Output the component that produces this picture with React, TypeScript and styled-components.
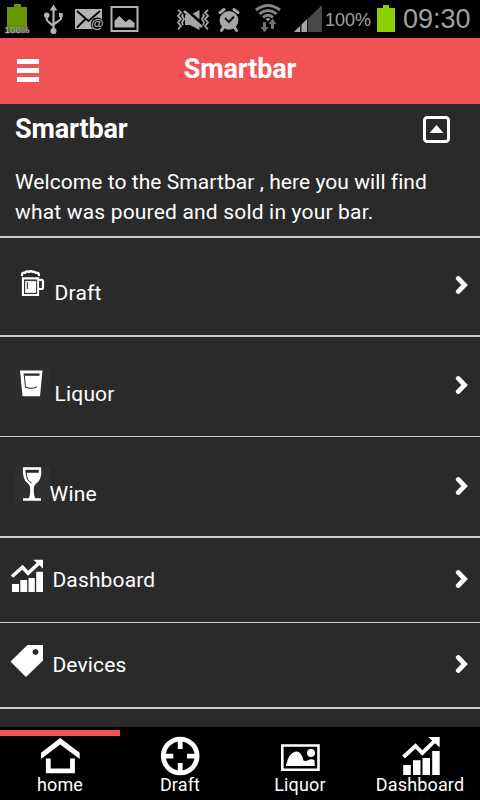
import React from 'react';
import styled, { createGlobalStyle } from 'styled-components';

const GlobalStyle = createGlobalStyle`
  * { box-sizing: border-box; }
  body { margin: 0; background: #2a2a2a; color: #fff; font-family: Roboto, "Liberation Sans", sans-serif; }
  svg { display: block; flex: none; }
`;

const Screen = styled.div`
  width: 480px;
  height: 800px;
  display: flex;
  flex-direction: column;
  overflow: hidden;
  background: #2a2a2a;
`;

const StatusBar = styled.div`
  height: 38px;
  flex: none;
  display: flex;
  background: #000;
  color: #a0a0a0;
  font-family: "Liberation Sans", Arial, sans-serif;
  white-space: nowrap;
`;

const StatusText = styled.span<{ $size: number; $width: number; $ml: number; $line: number }>`
  width: ${p => p.$width}px;
  margin-left: ${p => p.$ml}px;
  font-size: ${p => p.$size}px;
  line-height: ${p => p.$line}px;
`;

const Header = styled.header`
  height: 66px;
  flex: none;
  display: grid;
  grid-template-columns: 56px 1fr 56px;
  align-items: start;
  background: #f15354;
`;

const MenuButton = styled.button`
  border: 0;
  background: none;
  padding: 0;
  margin: 21px 0 0 17px;
  width: 22px;
  height: 23px;
  display: flex;
  flex-direction: column;
  justify-content: space-between;
`;

const MenuBar = styled.span`
  height: 5px;
  width: 22px;
  background: #fff;
`;

const Title = styled.h1`
  margin: 0;
  font-size: 27px;
  line-height: 32px;
  font-weight: 700;
  letter-spacing: -0.15px;
`;

const HeaderTitle = styled(Title)`
  margin-top: 15px;
  text-align: center;
`;

const Intro = styled.section`
  height: 134px;
  flex: none;
  padding: 9px 30px 0 15px;
  border-bottom: 2px solid #ccc;
`;

const IntroTop = styled.div`
  display: flex;
  justify-content: space-between;
  height: 54px;
`;

const CollapseButton = styled.button`
  width: 27px;
  height: 27px;
  margin-top: 3px;
  padding: 0;
  border: 0;
  background: none;
`;

const Welcome = styled.p`
  margin: 0;
  font-size: 21px;
  line-height: 30px;
  white-space: nowrap;
`;

const WelcomeLine = styled.span<{ $spacing: number }>`
  display: block;
  letter-spacing: ${p => p.$spacing}px;
`;

const Row = styled.div<{ $height: number; $line: number }>`
  height: ${p => p.$height}px;
  flex: none;
  display: flex;
  align-items: flex-start;
  border-bottom: ${p => p.$line}px solid #ccc;
`;

const RowIcon = styled.span<{ $top: number; $width: number }>`
  width: ${p => p.$width}px;
  flex: none;
  padding: ${p => p.$top}px 0 0 10px;
`;

const RowLabel = styled.span<{ $top: number }>`
  flex: 1;
  margin-top: ${p => p.$top}px;
  font-size: 21px;
  line-height: 26px;
  letter-spacing: 0.15px;
`;

const RowArrow = styled.span<{ $top: number }>`
  margin: ${p => p.$top}px 11px 0 0;
`;

const Spacer = styled.div`
  height: 18px;
  flex: none;
`;

const Nav = styled.nav`
  height: 73px;
  flex: none;
  display: grid;
  grid-template-columns: repeat(4, 1fr);
  background: #000;
  padding-top: 3px;
`;

const Tab = styled.div<{ $active?: boolean }>`
  border-top: 6px solid ${p => (p.$active ? '#f15354' : 'transparent')};
  display: flex;
  flex-direction: column;
  align-items: center;
`;

const TabLabel = styled.span`
  margin-top: 1px;
  font-size: 18px;
  line-height: 20px;
  letter-spacing: 0.15px;
`;

const BatteryCharge = () => (
  <svg width="34" height="38" viewBox="0 0 34 38">
    <path d="M7 7h7V4h7v3h6v26H7z" fill="#679600" />
    <text x="17" y="32.6" textAnchor="middle" textLength="25" fontSize="9.500" fill="#c0c0c0" stroke="#444" strokeWidth="1" paintOrder="stroke">100%</text>
  </svg>
);

const Usb = () => (
  <svg width="34" height="38" viewBox="34 0 34 38" fill="#b3b3b3">
    <g fill="none" stroke="#b3b3b3" strokeWidth="2.2">
      <path d="M53.5 9v22M46.7 15v4.500q0 1.500 6.800 6.500M61 15v3.500q0 1-7.500 6" />
    </g>
    <path d="M53.5 4.500l3.800 6h-7.600z" />
    <circle cx="46.7" cy="15.3" r="2.700" />
    <path d="M59 13h3.700v4H59z" />
    <circle cx="53.5" cy="31" r="3.100" />
  </svg>
);

const Mail = () => (
  <svg width="38" height="38" viewBox="68 0 38 38">
    <path d="M75 9h27v20H75z" fill="#b3b3b3" />
    <path d="M77 11l11.500 10L100 11M77 27.500l8.500-8.500" fill="none" stroke="#000" strokeWidth="1.800" />
    <circle cx="97.300" cy="24" r="6.600" fill="#000" />
    <text x="97.300" y="27.600" textAnchor="middle" fontSize="13" fontWeight="700" fill="#b9b9b9">@</text>
  </svg>
);

const Gallery = () => (
  <svg width="54" height="38" viewBox="106 0 54 38">
    <path d="M111.500 7h26v24h-26z" fill="none" stroke="#b3b3b3" strokeWidth="2" />
    <path d="M114.500 27.500V21l4.800-5 6.200 6 4-3 5 4v4.500z" fill="#b3b3b3" />
  </svg>
);

const Vibrate = () => (
  <svg width="54" height="38" viewBox="160 0 54 38">
    <g fill="none" stroke="#a6a6a6" strokeWidth="1.800">
      <path d="M178 10l3 2.500-3 3.500 3 3-3 3.500 3 3.500-3 3.500M183 14l-1 2 2 3-2 3.500 1 2.500M208 10l-3 2.500 3 3.500-3 3 3 3.500-3 3.500 3 3.500M203 14l1 2-2 3 2 3.500-1 2.500" />
    </g>
    <path d="M185 15h5l9.500-5v20l-9.500-5h-5z" fill="#a6a6a6" />
    <path d="M185.500 10.500l16.500 14" stroke="#000" strokeWidth="4.500" />
    <path d="M184 11l18 16" stroke="#a6a6a6" strokeWidth="2.500" />
  </svg>
);

const Alarm = () => (
  <svg width="34" height="38" viewBox="214 0 34 38">
    <g stroke="#a6a6a6" strokeWidth="3" strokeLinecap="round">
      <path d="M220 12.500l4-3M234 9.500l4 3M223 28l-1.500 2.500M235 28l1.500 2.500" />
    </g>
    <circle cx="229" cy="20.300" r="9.400" fill="#a6a6a6" />
    <path d="M225 18l4 4 5-5.500" fill="none" stroke="#111" strokeWidth="1.900" />
  </svg>
);

const Wifi = () => (
  <svg width="41" height="38" viewBox="248 0 41 38">
    <g fill="none" stroke="#858585" strokeWidth="2.900">
      <path d="M256 10q12-9 24 0M259.500 13.800q8.500-6.500 17 0M263 17.300q5-4 10 0" />
    </g>
    <path d="M265.500 19q2.500-2 5 0l-2.500 2.500z" fill="#999" />
    <path d="M263 22h3v5h2.500l-4 5.500-4-5.500h2.500zM271 29v-5h-2.500l4-5.500 4 5.500H274v5z" fill="#707070" />
  </svg>
);

const Signal = () => (
  <svg width="33" height="38" viewBox="289 0 33 38">
    <path d="M294 32L322 5v27z" fill="#484848" />
    <path d="M294 32l6-6v6zM301.500 24.500l5.500-5.500v13h-5.500z" fill="#a6a6a6" />
    <path d="M300.800 22v11M307.500 17v16" stroke="#111" strokeWidth="1" />
  </svg>
);

const Battery = () => (
  <svg width="26" height="38" viewBox="372 0 26 38">
    <path d="M377 8h6V5h6v3h6v24h-18z" fill="#8fce00" />
  </svg>
);

const Collapse = () => (
  <svg width="27" height="27" viewBox="0 0 27 27">
    <rect x="1.500" y="1.500" width="24" height="24" rx="2.800" fill="none" stroke="#fff" strokeWidth="3" />
    <path d="M13.500 9L20.500 17h-14z" fill="#fff" />
  </svg>
);

const Chevron = () => (
  <svg width="14" height="20" viewBox="0 0 14 20">
    <path d="M3.200 3.400L9.600 10l-6.400 6.600" fill="none" stroke="#fff" strokeWidth="4.700" strokeLinecap="round" strokeLinejoin="miter" />
  </svg>
);

const Beer = () => (
  <svg width="36" height="28" viewBox="0 0 36 28">
    <path d="M12 5q0-2.800 3-2.300 1-1.800 3.500-.8 2.500-1.300 4 0 2-.8 3 .8 3.500-.3 3.500 2.300" fill="none" stroke="#fff" strokeWidth="2.400" strokeLinecap="round" />
    <path d="M13 8.300h15v16.700h-15z" fill="none" stroke="#fff" strokeWidth="2.200" />
    <path d="M15 10.800h11.300v12.200H15z" fill="#fff" />
    <path d="M14.700 10.700h12v12.600h-12z" fill="none" stroke="#2a2a2a" strokeWidth="0.700" />
    <path d="M29 9.800h2.500q1.500 0 1.500 1.500v6.200q0 1.500-1.500 1.500H29" fill="none" stroke="#fff" strokeWidth="2.200" />
    <path d="M17.300 12v7" stroke="#2a2a2a" strokeWidth="1" />
  </svg>
);

const Shot = () => (
  <svg width="40" height="34" viewBox="0 0 40 34">
    <path d="M5 0h35v34H5z" fill="#2d2d2d" />
    <path d="M10 3.500h22.500L30 29.300H12.500z" fill="#fff" />
    <path d="M13.500 6.500h16v2.300H13.700z" fill="#2a2a2a" />
    <path d="M14.300 8.500l1.200 11.800q7.500 2.200 11.500-.6" fill="none" stroke="#2a2a2a" strokeWidth="1" />
  </svg>
);

const Wine = () => (
  <svg width="40" height="35" viewBox="0 0 40 35">
    <path d="M5 0h35v35H5z" fill="#303030" />
    <path d="M13 0.300h18q1.500 12-4.500 16-3 2-2.700 7 .2 7 1.700 8h5.500v2.500H13V31.300h5.500q1.500-1 1.700-8 .3-5-2.700-7Q12 12 13 0.300z" fill="#fff" />
    <path d="M15.500 2.800h13.200v3H15.500z" fill="#2a2a2a" />
    <path d="M16.200 5.500q0 8 5.500 10.500" fill="none" stroke="#2a2a2a" strokeWidth="1" />
  </svg>
);

const Chart = () => (
  <svg width="33" height="33" viewBox="0 0 33 33">
    <path d="M2 25h7v8H2zM10.300 21h6.900v12h-6.900zM18.500 19h6.300v14h-6.300zM26.200 12.800h6.800V33h-6.800z" fill="#fff" />
    <path d="M2 17.500L12.500 8.200l5.600 6L29 4" fill="none" stroke="#fff" strokeWidth="3.500" />
    <path d="M23.300 0.800H33v8.800z" fill="#fff" />
  </svg>
);

const Tag = () => (
  <svg width="34" height="34" viewBox="0 0 34 34">
    <path fillRule="evenodd" d="M17.500 1H33v15.500L16 33 .5 17.500zM25.500 5a3 3 0 1 0 .01 0z" fill="#fff" />
  </svg>
);

const Home = () => (
  <svg width="40" height="38" viewBox="0 0 40 38">
    <path d="M20.200 2L39.700 16.800v6.200L20.200 8.500 1 23v-6.200z" fill="#fff" />
    <path d="M8.300 22.500v12.300h24.200V22.500" fill="none" stroke="#fff" strokeWidth="4.800" />
  </svg>
);

const Target = () => (
  <svg width="40" height="40" viewBox="0 0 40 40">
    <circle cx="20.200" cy="20" r="16.900" fill="none" stroke="#fff" strokeWidth="4.800" />
    <path d="M20.200 4v9M20.200 27v9M4.500 20.200h8.800M27 20.200h9" stroke="#fff" strokeWidth="4.800" />
  </svg>
);

const Picture = () => (
  <svg width="40" height="38" viewBox="0 0 40 38">
    <path d="M2.300 9.500h36.200v24.300H2.300z" fill="none" stroke="#fff" strokeWidth="2.600" />
    <path d="M6 30q2-12 9-14.200 6-1.500 8.500 8.700 2 1 5-.5 3-1.500 6 0l.3 6z" fill="#fff" />
    <circle cx="31" cy="17" r="4" fill="#fff" />
  </svg>
);

const GrowthTab = () => (
  <svg width="40" height="40" viewBox="0 0 40 40">
    <path d="M3.200 29h7.600v10H3.200zM13 24.200h7.500V39H13zM22.500 22h7.500v17h-7.500zM32.200 15h7.500v24h-7.500z" fill="#fff" />
    <path d="M3.500 21L15.500 10l6.800 7L35 4.700" fill="none" stroke="#fff" strokeWidth="3.900" />
    <path d="M28.300 1h11.400v10.500z" fill="#fff" />
  </svg>
);

const TabIcon = styled.span`
  height: 38px;
  overflow: visible;
`;

const rows = [
  { label: 'Draft', icon: <Beer />, height: 99, line: 2, iconTop: 32, indent: 54.6, labelTop: 42, arrowTop: 37 },
  { label: 'Liquor', icon: <Shot />, height: 100, line: 1, iconTop: 30, indent: 54.6, labelTop: 44, arrowTop: 38 },
  { label: 'Wine', icon: <Wine />, height: 101, line: 2, iconTop: 30, indent: 49.6, labelTop: 44, arrowTop: 39 },
  { label: 'Dashboard', icon: <Chart />, height: 85, line: 1, iconTop: 21, indent: 52.4, labelTop: 29, arrowTop: 31 },
  { label: 'Devices', icon: <Tag />, height: 86, line: 2, iconTop: 21, indent: 52.4, labelTop: 29, arrowTop: 31 },
];

const tabs = [
  { label: 'home', icon: <Home /> },
  { label: 'Draft', icon: <Target /> },
  { label: 'Liquor', icon: <Picture /> },
  { label: 'Dashboard', icon: <GrowthTab /> },
];

export default function App() {
  return (
    <Screen>
      <GlobalStyle />
      <StatusBar>
        <BatteryCharge />
        <Usb />
        <Mail />
        <Gallery />
        <Vibrate />
        <Alarm />
        <Wifi />
        <Signal />
        <StatusText $size={18} $width={47} $ml={3} $line={41}>100%</StatusText>
        <Battery />
        <StatusText $size={27} $width={70} $ml={5} $line={39}>09:30</StatusText>
      </StatusBar>
      <Header>
        <MenuButton aria-label="Menu">
          <MenuBar />
          <MenuBar />
          <MenuBar />
        </MenuButton>
        <HeaderTitle>Smartbar</HeaderTitle>
      </Header>
      <Intro>
        <IntroTop>
          <Title as="h2">Smartbar</Title>
          <CollapseButton aria-label="Collapse"><Collapse /></CollapseButton>
        </IntroTop>
        <Welcome>
          <WelcomeLine $spacing={0.06}>Welcome to the Smartbar , here you will find</WelcomeLine>
          <WelcomeLine $spacing={0.18}>what was poured and sold in your bar.</WelcomeLine>
        </Welcome>
      </Intro>
      {rows.map(r => (
        <Row key={r.label} $height={r.height} $line={r.line}>
          <RowIcon $top={r.iconTop} $width={r.indent}>{r.icon}</RowIcon>
          <RowLabel $top={r.labelTop}>{r.label}</RowLabel>
          <RowArrow $top={r.arrowTop}><Chevron /></RowArrow>
        </Row>
      ))}
      <Spacer />
      <Nav>
        {tabs.map((t, i) => (
          <Tab key={t.label} $active={i === 0}>
            <TabIcon>{t.icon}</TabIcon>
            <TabLabel>{t.label}</TabLabel>
          </Tab>
        ))}
      </Nav>
    </Screen>
  );
}
